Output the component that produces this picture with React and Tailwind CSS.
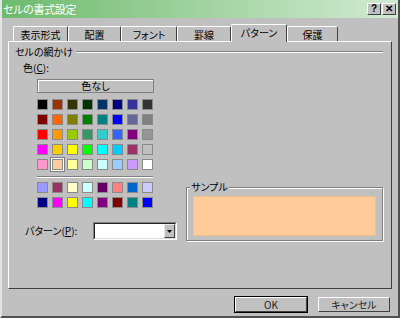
import React from 'react'

const MAIN_ROWS = [
  ['#000000', '#993300', '#333300', '#003300', '#003366', '#000080', '#333399', '#333333'],
  ['#800000', '#ff6600', '#808000', '#008000', '#008080', '#0000ff', '#666699', '#808080'],
  ['#ff0000', '#ff9900', '#99cc00', '#339966', '#33cccc', '#3366ff', '#800080', '#969696'],
  ['#ff00ff', '#ffcc00', '#ffff00', '#00ff00', '#00ffff', '#00ccff', '#993366', '#c0c0c0'],
  ['#ff99cc', '#ffcc99', '#ffff99', '#ccffcc', '#ccffff', '#99ccff', '#cc99ff', '#ffffff'],
]

const CHART_ROWS = [
  ['#9999ff', '#993366', '#ffffcc', '#ccffff', '#660066', '#ff8080', '#0066cc', '#ccccff'],
  ['#000080', '#ff00ff', '#ffff00', '#00ffff', '#800080', '#800000', '#008080', '#0000ff'],
]

const TABS = [
  { label: '表示形式', w: 'w-[55px]' },
  { label: '配置', w: 'w-[53px]' },
  { label: 'フォント', w: 'w-[56px]' },
  { label: '罫線', w: 'w-[54px]' },
  { label: 'パターン', w: 'w-[56px]', active: true },
  { label: '保護', w: 'w-[51px]' },
]

function Swatch({ color, selected }) {
  return (
    <div
      className={`w-[11px] h-[11px] border border-[#8a8a8a] ${selected ? 'shadow-[0_0_0_1px_#ffffff,0_0_0_2px_#808080]' : ''}`}
      style={{ backgroundColor: color }}
    />
  )
}

function SwatchGrid({ rows, selected }) {
  return (
    <div className="grid grid-cols-[repeat(8,11px)] gap-[4px]">
      {rows.flatMap((row, r) =>
        row.map((c, i) => (
          <Swatch key={`${r}-${i}`} color={c} selected={selected && selected[0] === r && selected[1] === i} />
        ))
      )}
    </div>
  )
}

function TitleButton({ children }) {
  return (
    <div className="w-[14px] h-[12px] bg-[#c0c0c0] border-t border-l border-white border-r border-b border-r-[#404040] border-b-[#404040] flex items-center justify-center text-[10px] font-bold leading-none text-black font-['Liberation_Sans',sans-serif]">
      {children}
    </div>
  )
}

function PushButton({ children, isDefault }) {
  return (
    <div className={`w-[74px] h-[17px] ${isDefault ? 'border border-black' : 'border border-transparent'}`}>
      <div className="w-full h-full border-t border-l border-white border-r border-b border-r-[#404040] border-b-[#404040] flex items-center justify-center text-[10px] leading-none text-[#222]">
        {children}
      </div>
    </div>
  )
}

export default function App() {
  return (
    <div className="w-[400px] h-[318px] bg-[#c0c0c0] flex flex-col overflow-hidden border-l-2 border-l-[#e4e4e4] border-r-2 border-r-[#505050] border-b-2 border-b-[#505050] text-[10px] text-black font-['Noto_Sans_CJK_JP',sans-serif] [font-feature-settings:'palt']">
      {/* title bar */}
      <div className="h-[18px] shrink-0 -ml-[2px] -mr-[2px] bg-linear-to-r from-[#6cba6c] to-[#d2ebd2] flex items-center pl-[3px] pr-[4px]">
        <span className="text-white text-[11px] leading-none tracking-[-0.3px]">セルの書式設定</span>
        <div className="ml-auto flex gap-[1px]">
          <TitleButton>?</TitleButton>
          <TitleButton>✕</TitleButton>
        </div>
      </div>

      <div className="pl-[6px] pr-[6px] pt-[6px] flex flex-col">
        {/* tabs */}
        <div className="flex items-end h-[17px] pl-[5px] relative z-10">
          {TABS.map(t => (
            <div
              key={t.label}
              className={`${t.w} flex items-center justify-center leading-none border-t border-l border-white border-r border-r-[#404040] rounded-t-[2px] ${
                t.active ? 'h-[18px] -mb-[1px] bg-[#c0c0c0] pb-[2px]' : 'h-[15px] pt-[1px]'
              }`}
            >
              {t.label}
            </div>
          ))}
        </div>

        {/* panel */}
        <div className="h-[248px] border-t border-l border-white border-r border-b border-r-[#404040] border-b-[#404040] pl-[6px] pr-[8px] pt-[4px] flex flex-col">
          <div className="flex items-center h-[12px]">
            <span className="leading-none">セルの網かけ</span>
            <div className="flex-1 ml-[3px] border-t border-[#808080] border-b border-b-white" />
          </div>

          <div className="ml-[8px] mt-[5px] leading-none">
            色(<span className="underline">C</span>):
          </div>

          <div className="flex mt-[6px]">
            <div className="flex flex-col w-[168px]">
              <div className="ml-[22px] w-[117px] h-[14px] border border-[#808080] shadow-[inset_1px_1px_0_#ffffff] flex items-center justify-center leading-none">
                色なし
              </div>
              <div className="ml-[22px] mt-[6px]">
                <SwatchGrid rows={MAIN_ROWS} selected={[4, 1]} />
              </div>
              <div className="ml-[22px] mt-[6px] w-[116px] border-t border-[#808080] border-b border-b-white" />
              <div className="ml-[22px] mt-[4px]">
                <SwatchGrid rows={CHART_ROWS} />
              </div>

              <div className="flex items-center mt-[14px]">
                <span className="ml-[10px] w-[68px] leading-none">
                  パターン(<span className="underline">P</span>):
                </span>
                <div className="w-[84px] h-[18px] border-t border-l border-[#808080] border-r border-b border-r-white border-b-white">
                  <div className="h-full border-t border-l border-[#222] border-r border-b border-r-[#dcdcdc] border-b-[#dcdcdc] bg-white flex justify-end">
                    <div className="w-[11px] h-full bg-[#c0c0c0] border-t border-l border-[#e8e8e8] border-r border-b border-r-[#404040] border-b-[#404040] flex items-center justify-center">
                      <svg width="5" height="3" viewBox="0 0 5 3">
                        <path d="M0 0h5L2.5 3z" fill="#000" />
                      </svg>
                    </div>
                  </div>
                </div>
              </div>
            </div>

            {/* sample */}
            <div className="ml-[6px] mt-[108px] w-[200px] h-[54px] relative border border-[#808080] shadow-[1px_1px_0_#ffffff,inset_1px_1px_0_#ffffff] pt-[8px] px-[6px] pb-[4px]">
              <span className="absolute -top-[6px] left-[3px] px-[1px] bg-[#c0c0c0] leading-none">サンプル</span>
              <div className="w-full h-full bg-[#ffcc99] border border-[#f0c08e]" />
            </div>
          </div>
        </div>

        {/* buttons */}
        <div className="flex justify-end gap-[9px] mt-[7px] pr-[1px]">
          <PushButton isDefault>OK</PushButton>
          <PushButton>キャンセル</PushButton>
        </div>
      </div>
    </div>
  )
}
